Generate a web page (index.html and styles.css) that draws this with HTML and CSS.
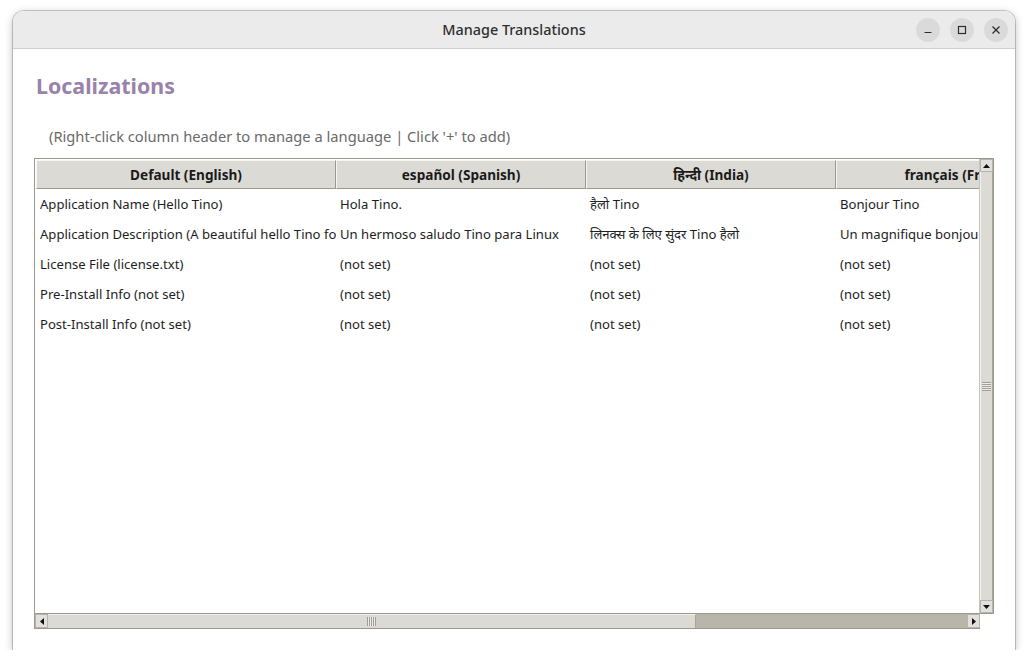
FILE: index.html
```html
<!DOCTYPE html>
<html lang="en">
<head>
<meta charset="utf-8">
<title>Manage Translations</title>
<link rel="stylesheet" href="styles.css">
</head>
<body>
<div class="window">
  <div class="titlebar">
    <div class="title">Manage Translations</div>
    <div class="controls">
      <span class="ctl"><svg width="10" height="10" viewBox="0 0 10 10"><path d="M1.5 7.5h7" stroke="#2e2e2e" stroke-width="1.2"/></svg></span>
      <span class="ctl"><svg width="10" height="10" viewBox="0 0 10 10"><rect x="1.5" y="1.5" width="7" height="7" fill="none" stroke="#2e2e2e" stroke-width="1.2"/></svg></span>
      <span class="ctl"><svg width="10" height="10" viewBox="0 0 10 10"><path d="M1.5 1.5l7 7M8.5 1.5l-7 7" stroke="#2e2e2e" stroke-width="1.3"/></svg></span>
    </div>
  </div>
  <div class="content">
    <h1 class="heading">Localizations</h1>
    <p class="hint">(Right-click column header to manage a language | Click '+' to add)</p>
    <div class="frame">
      <div class="viewport">
        <div class="grid">
          <div class="hrow">
            <div class="hcell c1">Default (English)</div>
            <div class="hcell c2">español (Spanish)</div>
            <div class="hcell c2">हिन्दी (India)</div>
            <div class="hcell c2">français (French)</div>
          </div>
          <div class="row">
            <div class="cell c1">Application Name (Hello Tino)</div>
            <div class="cell c2">Hola Tino.</div>
            <div class="cell c2">हैलो Tino</div>
            <div class="cell c2">Bonjour Tino</div>
          </div>
          <div class="row">
            <div class="cell c1">Application Description (A beautiful hello Tino for Linux)</div>
            <div class="cell c2">Un hermoso saludo Tino para Linux</div>
            <div class="cell c2">लिनक्स के लिए सुंदर Tino हैलो</div>
            <div class="cell c2">Un magnifique bonjour Tino pour Linux</div>
          </div>
          <div class="row">
            <div class="cell c1">License File (license.txt)</div>
            <div class="cell c2">(not set)</div>
            <div class="cell c2">(not set)</div>
            <div class="cell c2">(not set)</div>
          </div>
          <div class="row">
            <div class="cell c1">Pre-Install Info (not set)</div>
            <div class="cell c2">(not set)</div>
            <div class="cell c2">(not set)</div>
            <div class="cell c2">(not set)</div>
          </div>
          <div class="row">
            <div class="cell c1">Post-Install Info (not set)</div>
            <div class="cell c2">(not set)</div>
            <div class="cell c2">(not set)</div>
            <div class="cell c2">(not set)</div>
          </div>
        </div>
      </div>
      <div class="vscroll">
        <div class="sbtn"><svg width="7" height="4" viewBox="0 0 7 4"><path d="M0 4L3.5 0L7 4Z" fill="#111"/></svg></div>
        <div class="vthumb"><div class="vgrip"></div></div>
        <div class="sbtn"><svg width="7" height="4" viewBox="0 0 7 4"><path d="M0 0L3.5 4L7 0Z" fill="#111"/></svg></div>
      </div>
      <div class="hscroll">
        <div class="sbtn"><svg width="4" height="7" viewBox="0 0 4 7"><path d="M4 0L0 3.5L4 7Z" fill="#111"/></svg></div>
        <div class="htrack">
          <div class="hthumb"><div class="hgrip"></div></div>
        </div>
        <div class="sbtn"><svg width="4" height="7" viewBox="0 0 4 7"><path d="M0 0L4 3.5L0 7Z" fill="#111"/></svg></div>
      </div>
      <div class="corner"></div>
    </div>
  </div>
</div>
</body>
</html>
```

FILE: styles.css
```css
html, body {
  margin: 0;
  padding: 0;
  background: #ffffff;
}
body {
  padding: 11px 13px 0 13px;
  font-family: "Noto Sans", "Open Sans", sans-serif;
}
.window {
  width: 1002px;
  height: 639px;
  border-radius: 11px 11px 0 0;
  background: #ffffff;
  box-shadow: 0 0 0 1px rgba(0,0,0,0.18), 0 2px 8px rgba(0,0,0,0.28);
  display: flex;
  flex-direction: column;
  overflow: hidden;
}
.titlebar {
  height: 37px;
  flex: 0 0 37px;
  background: #ebebeb;
  border-bottom: 1px solid #cfcfcf;
  display: flex;
  align-items: center;
  justify-content: center;
  position: relative;
}
.title {
  font-family: "Noto Sans", sans-serif;
  font-size: 14.4px;
  font-weight: 500;
  color: #2f2f2f;
}
.controls {
  position: absolute;
  right: 7px;
  top: 7px;
  display: flex;
  gap: 10px;
}
.ctl {
  width: 24px;
  height: 24px;
  border-radius: 50%;
  background: #dadada;
  display: flex;
  align-items: center;
  justify-content: center;
}
.content {
  flex: 1;
  padding: 23px 20px 0 21px;
  display: flex;
  flex-direction: column;
}
.heading {
  margin: 0 0 0 2px;
  font-size: 21.4px;
  line-height: 28px;
  font-weight: 700;
  color: #9982ab;
}
.hint {
  margin: 26px 0 0 15px;
  font-size: 14.7px;
  line-height: 20px;
  color: #6a6a6a;
}
.frame {
  margin-top: 12px;
  width: 960px;
  height: 471px;
  display: grid;
  grid-template-columns: 945px 14px;
  grid-template-rows: 455px 15px;
  border-top: 1px solid #9c9890;
  border-left: 1px solid #9c9890;
  box-sizing: border-box;
}
.viewport {
  overflow: hidden;
  background: #ffffff;
  border-right: 1px solid #c7c4bd;
  border-bottom: 1px solid #9c9890;
  padding: 1px 0 0 1px;
  box-sizing: border-box;
}
.grid {
  width: 1100px;
}
.hrow {
  display: flex;
  height: 29px;
}
.hcell {
  box-sizing: border-box;
  height: 29px;
  background: #dcdad5;
  border-top: 1px solid #f6f5f3;
  border-left: 1px solid #f6f5f3;
  border-right: 1px solid #9c9890;
  border-bottom: 1px solid #9c9890;
  font-size: 13.6px;
  font-weight: 700;
  color: #1a1a1a;
  text-align: center;
  line-height: 28px;
  white-space: nowrap;
  overflow: hidden;
}
.c1 { width: 300px; flex: 0 0 300px; }
.c2 { width: 250px; flex: 0 0 250px; }
.row {
  display: flex;
  height: 30px;
}
.cell {
  box-sizing: border-box;
  padding-left: 4px;
  font-size: 13.1px;
  line-height: 30px;
  color: #1e1e1e;
  white-space: nowrap;
  overflow: hidden;
}
.vscroll {
  display: flex;
  flex-direction: column;
  background: #dcdad5;
  border-right: 1px solid #9c9890;
  border-bottom: 1px solid #9c9890;
  box-sizing: border-box;
}
.vscroll .sbtn {
  height: 13px;
  flex: 0 0 13px;
}
.sbtn {
  background: #e2e0dc;
  border: 1px solid #b8b4ac;
  box-sizing: border-box;
  display: flex;
  align-items: center;
  justify-content: center;
}
.vthumb {
  flex: 1;
  background: #dcdad5;
  border-left: 1px solid #f3f2ef;
  border-right: 1px solid #a9a59d;
  display: flex;
  align-items: center;
  justify-content: center;
}
.vgrip {
  width: 9px;
  height: 9px;
  background: repeating-linear-gradient(to bottom, #a29e96 0 1px, #eeece8 1px 2px);
}
.hscroll {
  display: flex;
  background: #dcdad5;
  border-bottom: 1px solid #9c9890;
  box-sizing: border-box;
}
.hscroll .sbtn {
  width: 13px;
  flex: 0 0 13px;
}
.htrack {
  flex: 1;
  display: flex;
  background: #bab5aa;
}
.hthumb {
  width: 648px;
  background: #dcdad5;
  border-top: 1px solid #f3f2ef;
  border-right: 1px solid #a9a59d;
  display: flex;
  align-items: center;
  justify-content: center;
  box-sizing: border-box;
}
.hgrip {
  width: 9px;
  height: 9px;
  background: repeating-linear-gradient(to right, #a29e96 0 1px, #eeece8 1px 2px);
}
.corner {
  background: #ffffff;
}
```
